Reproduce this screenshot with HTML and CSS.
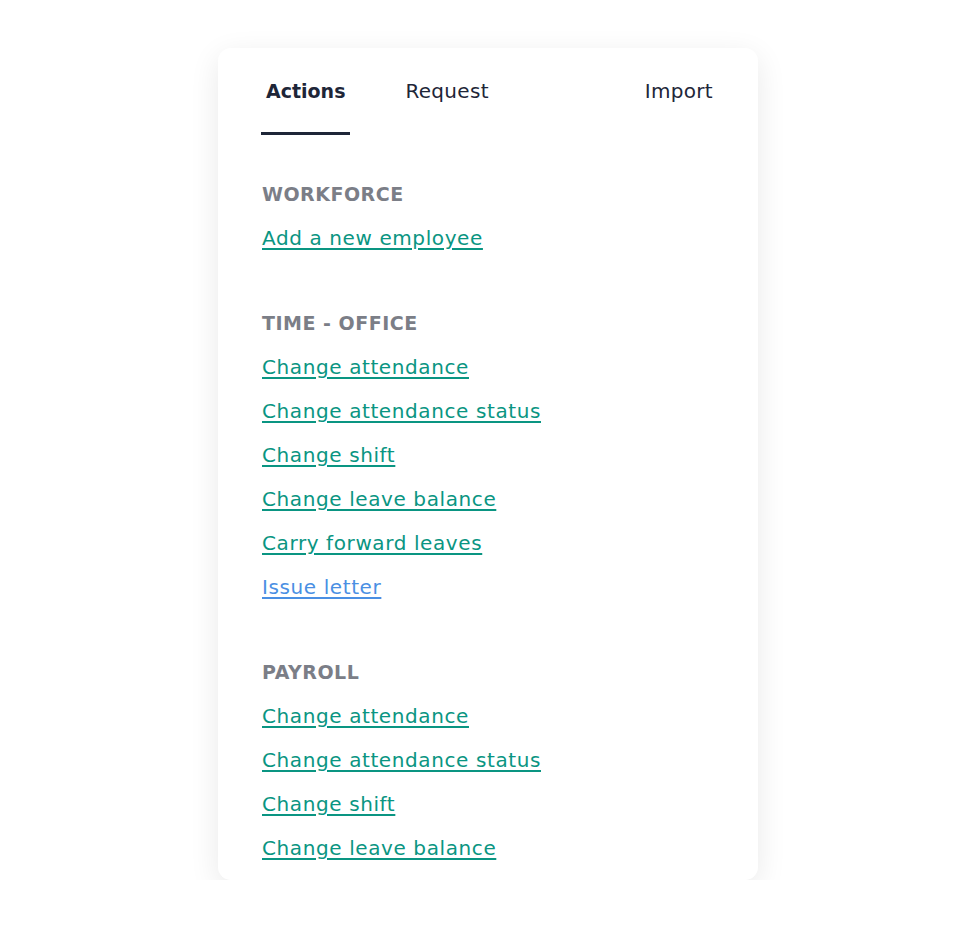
FILE: index.html
```html
<!DOCTYPE html>
<html lang="en">
<head>
    <meta charset="UTF-8">
    <meta name="viewport" content="width=device-width, initial-scale=1.0">
    <title>Actions</title>
    <link rel="stylesheet" href="styles.css">
</head>
<body>

    <div class="panel">
      <div class="tabs">
        <a class="tab active" href="#">Actions</a>
        <a class="tab" href="#">Request</a>
        <a class="tab tab-right" href="#">Import</a>
      </div>

      <div class="group">
        <h2>WORKFORCE</h2>
        <ul>
          <li><a href="#">Add a new employee</a></li>
        </ul>
      </div>

      <div class="group">
        <h2>TIME - OFFICE</h2>
        <ul>
          <li><a href="#">Change attendance</a></li>
          <li><a href="#">Change attendance status</a></li>
          <li><a href="#">Change shift</a></li>
          <li><a href="#">Change leave balance</a></li>
          <li><a href="#">Carry forward leaves</a></li>
          <li><a class="visited" href="#">Issue letter</a></li>
        </ul>
      </div>

      <div class="group">
        <h2>PAYROLL</h2>
        <ul>
          <li><a href="#">Change attendance</a></li>
          <li><a href="#">Change attendance status</a></li>
          <li><a href="#">Change shift</a></li>
          <li><a href="#">Change leave balance</a></li>
        </ul>
      </div>
    </div>

</body>
</html>
```

FILE: styles.css
```css
body {
    font-family: "DejaVu Sans", "Liberation Sans", sans-serif;
    background-color: white;
    margin: 0;
    padding: 48px 0 0 218px;
}

.panel {
    width: 540px;
    height: 832px;
    box-sizing: border-box;
    background-color: white;
    border-radius: 13px;
    box-shadow: 0 8px 30px rgba(0,0,0,0.09);
    padding: 0 45px 0 43px;
    overflow: hidden;
}

.tabs {
    display: flex;
    gap: 50px;
    margin-bottom: 44px;
}

.tab {
    display: block;
    padding: 32px 5px 29px;
    color: #1e2638;
    text-decoration: none;
    font-size: 20px;
    line-height: 23px;
    letter-spacing: 0.3px;
    border-bottom: 3px solid transparent;
}

.tab.active {
    font-size: 19px;
    letter-spacing: 0;
    font-weight: bold;
    border-bottom-color: #1e2638;
}

.tab-right {
    margin-left: auto;
    padding-right: 0;
}

.group {
    margin: 0 0 48px 1px;
}

.group h2 {
    margin: 0;
    font-size: 19px;
    letter-spacing: 0.5px;
    line-height: 30px;
    color: #7b7e87;
}

.group ul {
    list-style-type: none;
    padding: 0;
    margin: 0;
}

.group li {
    font-size: 20px;
    line-height: 44px;
}

.group h2 + ul {
    margin-top: 7px;
}

.group a {
    color: #0a9582;
    letter-spacing: 0.6px;
    text-underline-offset: 3px;
}

.group a.visited {
    color: #4a8fe3;
}
```
